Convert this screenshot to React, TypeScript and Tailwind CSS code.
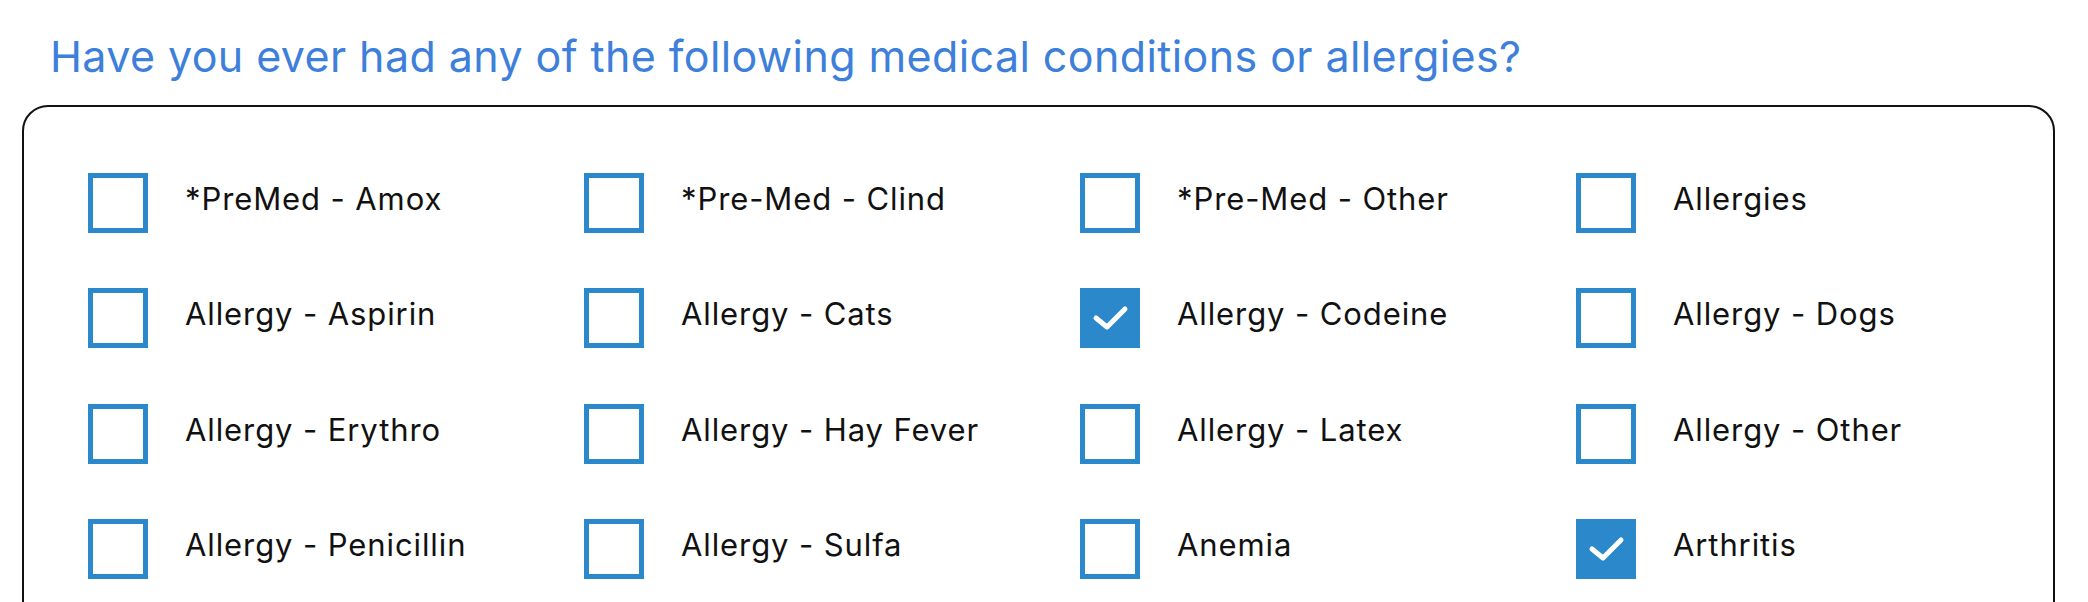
import React from "react";

const items: { label: string; checked?: boolean }[] = [
  { label: "*PreMed - Amox" },
  { label: "*Pre-Med - Clind" },
  { label: "*Pre-Med - Other" },
  { label: "Allergies" },
  { label: "Allergy - Aspirin" },
  { label: "Allergy - Cats" },
  { label: "Allergy - Codeine", checked: true },
  { label: "Allergy - Dogs" },
  { label: "Allergy - Erythro" },
  { label: "Allergy - Hay Fever" },
  { label: "Allergy - Latex" },
  { label: "Allergy - Other" },
  { label: "Allergy - Penicillin" },
  { label: "Allergy - Sulfa" },
  { label: "Anemia" },
  { label: "Arthritis", checked: true },
];

function Box({ checked }: { checked?: boolean }) {
  if (checked) {
    return (
      <div className="w-[60px] h-[60px] shrink-0 bg-[#2b88cb] flex items-center justify-center">
        <svg width="60" height="60" viewBox="0 0 60 60">
          <polyline
            points="16,30 27,39 45,21"
            fill="none"
            stroke="white"
            strokeWidth="5"
            strokeLinecap="round"
            strokeLinejoin="round"
          />
        </svg>
      </div>
    );
  }
  return <div className="w-[60px] h-[60px] shrink-0 border-[5px] border-[#2b88cb] bg-white" />;
}

export default function App() {
  return (
    <div className="min-h-screen bg-white" style={{ fontFamily: "Inter, Roboto, 'Liberation Sans', sans-serif" }}>
      <div className="pt-[30px] pl-[50px]">
        <h1 className="text-[43px] leading-[52px] font-normal tracking-[0.4px] text-[#3d7fdb] m-0">
          Have you ever had any of the following medical conditions or allergies?
        </h1>
      </div>
      <div className="mt-[23px] ml-[22px] w-[2033px] border-2 border-[#111] rounded-[26px] pt-[66px] pl-[64px] pb-[120px]">
        <div className="grid grid-cols-[repeat(4,496px)] gap-y-[55.4px]">
          {items.map((it) => (
            <div key={it.label} className="flex items-center h-[60px]">
              <Box checked={it.checked} />
              <span className="ml-[37px] mb-[9px] text-[31px] leading-none tracking-[0.9px] text-[#111]">
                {it.label}
              </span>
            </div>
          ))}
        </div>
      </div>
    </div>
  );
}
